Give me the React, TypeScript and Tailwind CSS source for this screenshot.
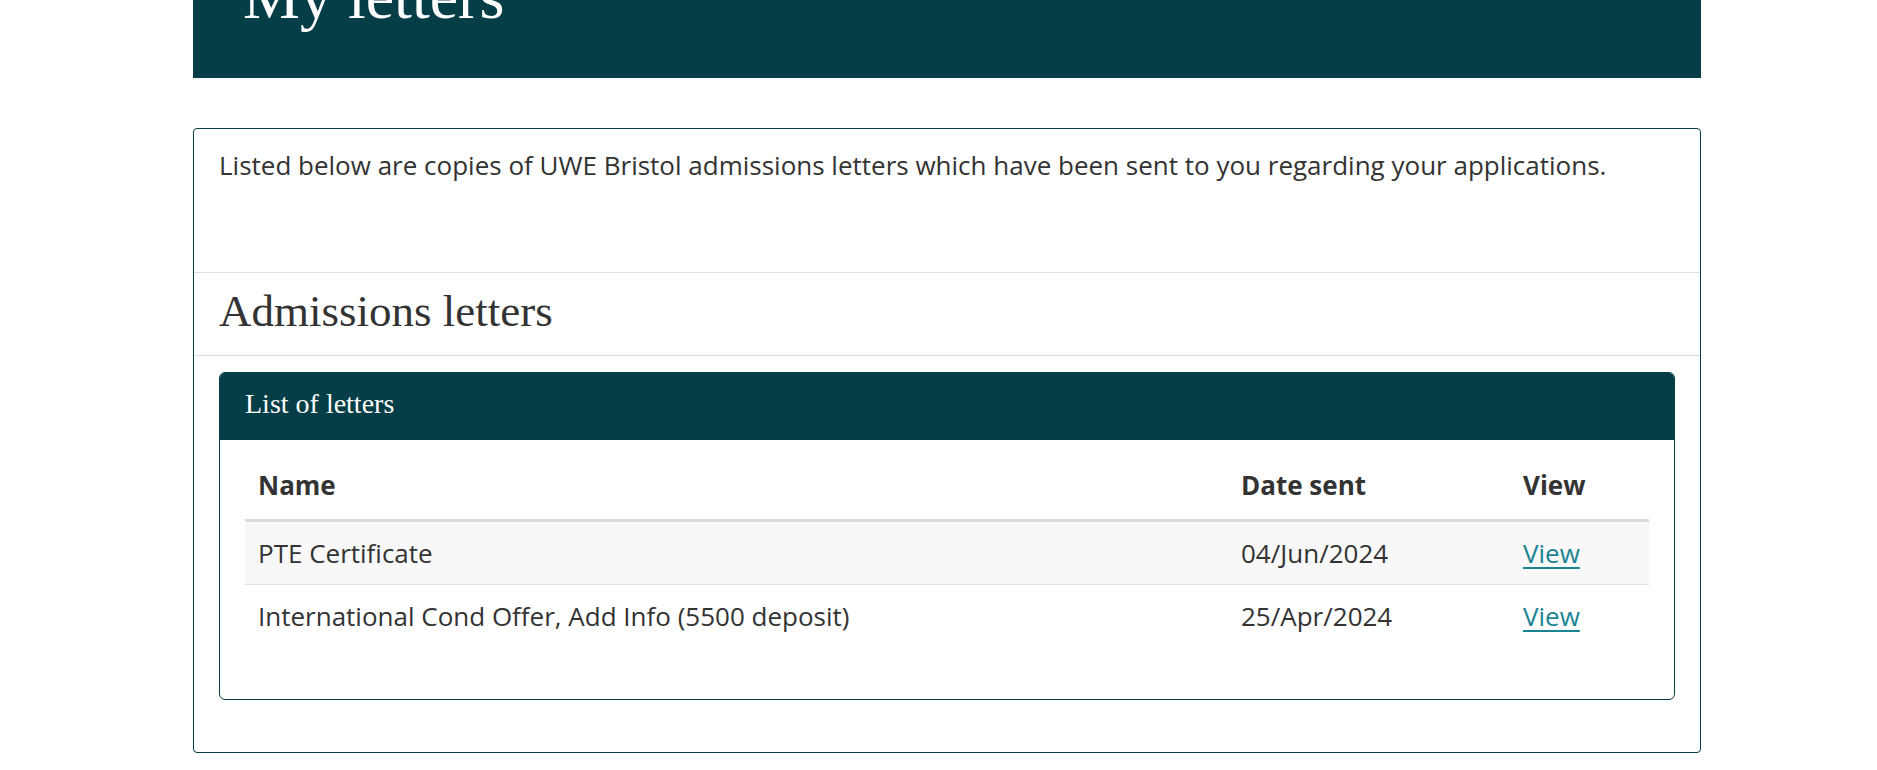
import React from "react"

const letters = [
  { name: "PTE Certificate", date: "04/Jun/2024" },
  { name: "International Cond Offer, Add Info (5500 deposit)", date: "25/Apr/2024" },
]

const serif = "font-['Liberation_Serif',serif]"

export default function App() {
  return (
    <div className="min-h-screen bg-white font-['Open_Sans',sans-serif] text-[#333333]">
      <div className="ml-[193px] w-[1508px]">
        <div className="h-[78px] overflow-hidden bg-[#053e47] pl-[50px]">
          <h1 className={`${serif} -mt-[42px] text-[64px] leading-[77px] text-white`}>My letters</h1>
        </div>

        <div className="mt-[50px] rounded-[4px] border border-[#053e47]">
          <p className="h-[143px] px-[25px] pt-[18px] text-[26px] leading-[36px]">
            Listed below are copies of UWE Bristol admissions letters which have been sent to you
            regarding your applications.
          </p>

          <div className="border-y border-[#dedede] px-[25px] pb-[16px] pt-[10px]">
            <h2 className={`${serif} text-[45px] leading-[56px]`}>Admissions letters</h2>
          </div>

          <div className="px-[25px] pb-[52px] pt-[16px]">
            <div className="overflow-hidden rounded-[6px] border border-[#053e47]">
              <div className="h-[67px] bg-[#053e47] px-[25px] pt-[13px]">
                <h3 className={`${serif} text-[28px] leading-[36px] text-white`}>List of letters</h3>
              </div>
              <div className="px-[25px] pb-[52px] pt-[23px]">
                <table className="w-full table-fixed border-collapse text-left text-[26px]">
                  <thead>
                    <tr className="border-b-[3px] border-[#dcdcdc]">
                      <th className="px-[13px] pb-[12px] font-bold leading-[44px]">Name</th>
                      <th className="w-[282px] px-[13px] pb-[12px] font-bold leading-[44px]">Date sent</th>
                      <th className="w-[139px] px-[13px] pb-[12px] font-bold leading-[44px]">View</th>
                    </tr>
                  </thead>
                  <tbody>
                    {letters.map((l, i) => (
                      <tr key={l.name} className={i === 0 ? "border-b border-[#dedede] bg-[#f8f8f8]" : ""}>
                        <td className="px-[13px] py-[9px] leading-[44px]">{l.name}</td>
                        <td className="px-[13px] py-[9px] leading-[44px]">{l.date}</td>
                        <td className="px-[13px] py-[9px] leading-[44px]">
                          <a href="#" className="text-[#1b8493] underline underline-offset-[4px]">
                            View
                          </a>
                        </td>
                      </tr>
                    ))}
                  </tbody>
                </table>
              </div>
            </div>
          </div>
        </div>
      </div>
    </div>
  )
}
